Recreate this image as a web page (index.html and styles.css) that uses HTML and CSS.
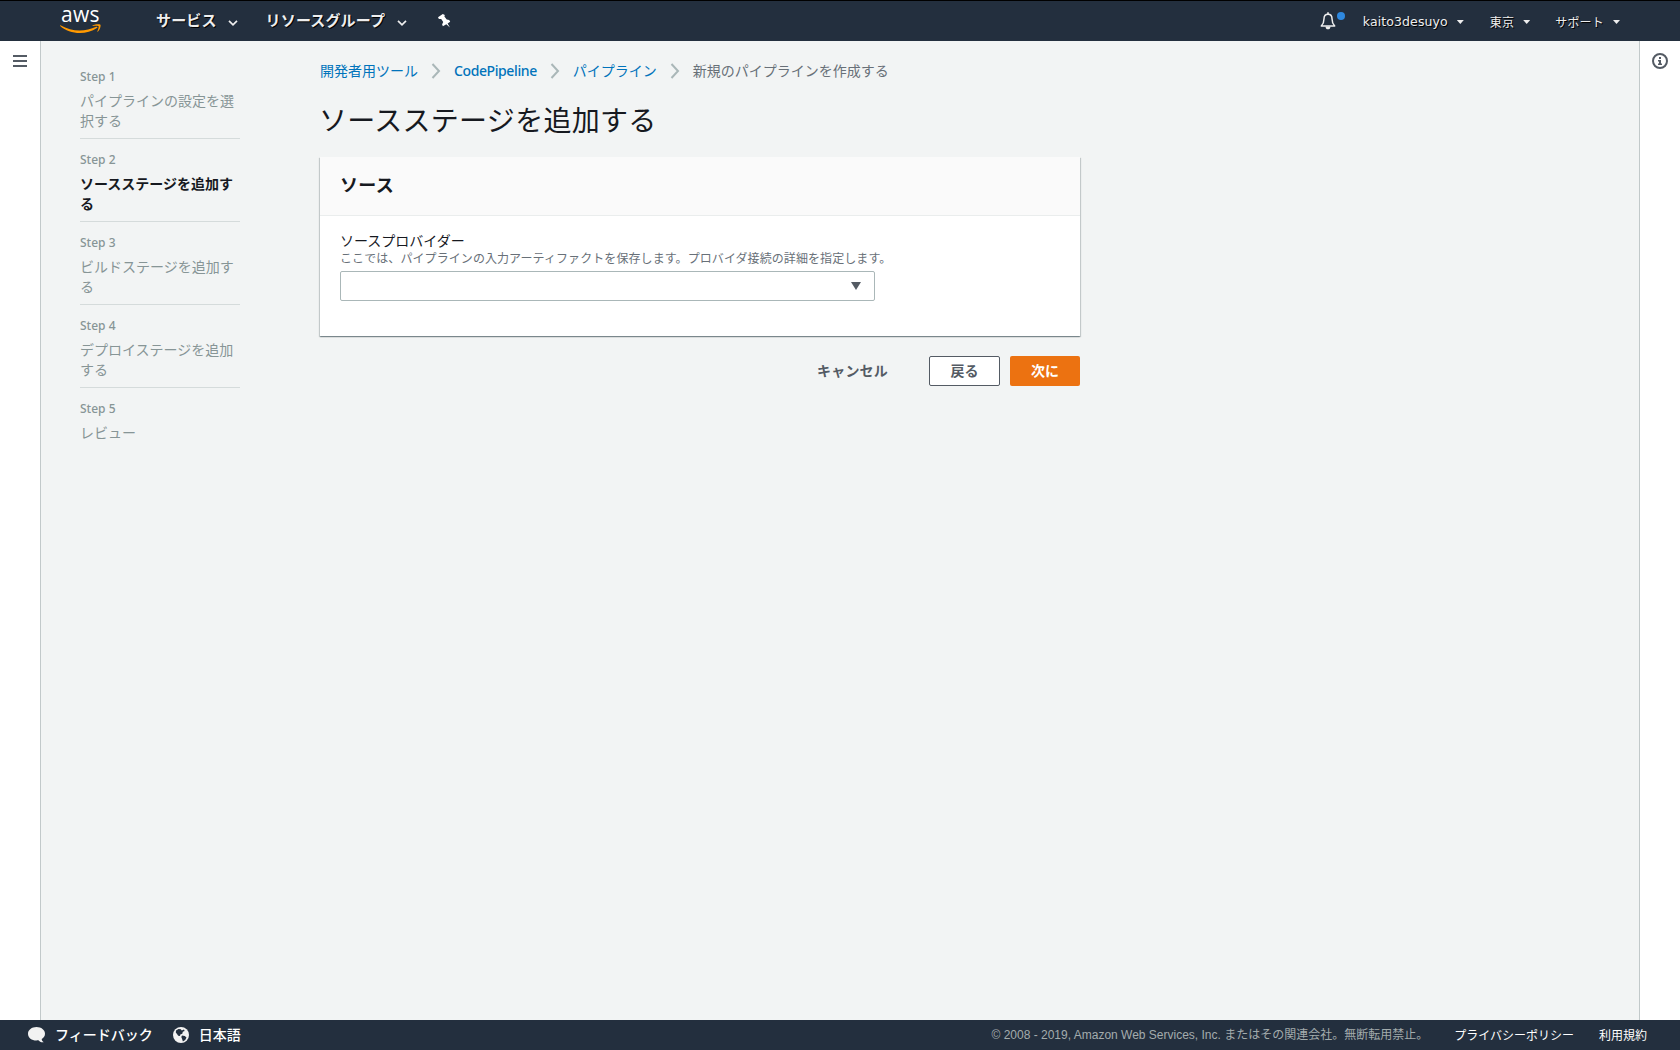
FILE: index.html
```html
<!doctype html>
<html lang="ja">
<head>
    <meta charset="UTF-8">
    <meta name="viewport" content="width=device-width, initial-scale=1.0">
    <title>ソースステージを追加する</title>
    <link rel="stylesheet" href="styles.css">
</head>
<body>
    <header>
        <a class="logo" href="#">
            <span class="logo-text">aws</span>
            <svg class="logo-smile" width="41" height="10" viewBox="0 0 41 10">
                <path d="M.4 1.200C12 8 25 8 36.200 2.800c1.200-.5 1.700.4.7 1.200C26 11.500 9.500 10.500.2 2 0 1.400 0 1 .4 1.200z" fill="#f90"/>
                <path d="M32.500 1.400C35 .2 39.500-.2 40.400.7c.6.900-.3 5.300-2.600 7.100-.5.200-.6-.1-.4-.5.800-1.900 1.600-4.500 1.100-5.200-.6-.600-3.600-.4-5.500-.2-.6 0-.8-.2-.5-.5z" fill="#f90"/>
            </svg>
        </a>
        <nav class="main-nav">
            <a class="services" href="#">サービス
                <svg width="10" height="6" viewBox="0 0 10 6"><path d="M1 .8l4 4 4-4" fill="none" stroke="#eee" stroke-width="1.700"/></svg>
            </a>
            <a class="groups" href="#">リソースグループ
                <svg width="10" height="6" viewBox="0 0 10 6"><path d="M1 .8l4 4 4-4" fill="none" stroke="#eee" stroke-width="1.700"/></svg>
            </a>
            <svg class="pin" width="13" height="14" viewBox="0 0 13 14">
                <path d="M4.800 0l2 1.100-.4 1.300 2.300 3.200 2.500.4 1 1.800-2.600 1.600 2.300 4-3.600-3.200-3.400 2-.8-1.800 1.100-2.300L3.200 4.900.9 5 0 3.200z" fill="#fff"/>
            </svg>
        </nav>
        <div class="account-nav">
            <span class="bell">
                <svg width="16" height="18" viewBox="0 0 16 18">
                    <path d="M8 2.200c-3 0-4 2.200-4 4.500 0 4-1 5.500-2.700 7.300h13.400C13 12.200 12 10.700 12 6.700c0-2.300-1-4.500-4-4.500z" fill="none" stroke="#eee" stroke-width="1.500" stroke-linejoin="round"/>
                    <path d="M7.200.3h1.600v2H7.200zM5.500 14.500h5C10.300 16.500 9.500 17.300 8 17.300s-2.300-.8-2.500-2.800z" fill="#eee"/>
                </svg>
                <span class="badge"></span>
            </span>
            <a class="user" href="#">kaito3desuyo <i class="caret"></i></a>
            <a href="#">東京 <i class="caret"></i></a>
            <a href="#">サポート <i class="caret"></i></a>
        </div>
    </header>

    <div class="page">
        <aside class="left-bar">
            <svg width="14" height="12" viewBox="0 0 14 12"><path d="M0 1h14M0 6h14M0 11h14" stroke="#545b64" stroke-width="2"/></svg>
        </aside>

        <div class="content">
            <ol class="steps">
                <li><small>Step 1</small>パイプラインの設定を選択する</li>
                <li class="active"><small>Step 2</small>ソースステージを追加する</li>
                <li><small>Step 3</small>ビルドステージを追加する</li>
                <li><small>Step 4</small>デプロイステージを追加する</li>
                <li><small>Step 5</small>レビュー</li>
            </ol>

            <main>
                <div class="breadcrumbs">
                    <a href="#">開発者用ツール</a>
                    <svg width="10" height="16" viewBox="0 0 10 16"><path d="M1.500 1l6.500 7-6.500 7" fill="none" stroke="#aab7b8" stroke-width="2"/></svg>
                    <a class="latin" href="#">CodePipeline</a>
                    <svg width="10" height="16" viewBox="0 0 10 16"><path d="M1.500 1l6.500 7-6.500 7" fill="none" stroke="#aab7b8" stroke-width="2"/></svg>
                    <a href="#">パイプライン</a>
                    <svg width="10" height="16" viewBox="0 0 10 16"><path d="M1.500 1l6.500 7-6.500 7" fill="none" stroke="#aab7b8" stroke-width="2"/></svg>
                    <span>新規のパイプラインを作成する</span>
                </div>

                <h1>ソースステージを追加する</h1>

                <section class="card">
                    <h2>ソース</h2>
                    <div class="card-body">
                        <div class="label">ソースプロバイダー</div>
                        <div class="hint">ここでは、パイプラインの入力アーティファクトを保存します。プロバイダ接続の詳細を指定します。</div>
                        <div class="select">
                            <svg width="10" height="8" viewBox="0 0 10 8"><path d="M0 0h10L5 8z" fill="#545b64"/></svg>
                        </div>
                    </div>
                </section>

                <div class="actions">
                    <button class="cancel">キャンセル</button>
                    <button class="back">戻る</button>
                    <button class="next">次に</button>
                </div>
            </main>
        </div>

        <aside class="right-bar">
            <svg width="16" height="16" viewBox="0 0 16 16">
                <circle cx="8" cy="8" r="7" fill="none" stroke="#545b64" stroke-width="2"/>
                <path d="M7 4h2v2H7zM6 7h3v3.500h1V12H6v-1.500h1v-2H6z" fill="#545b64"/>
            </svg>
        </aside>
    </div>

    <footer>
        <a class="feedback" href="#">
            <svg width="17" height="16" viewBox="0 0 17 16"><path d="M8.500 0C13.200 0 17 2.900 17 6.700c0 2.300-1.300 4.200-3.300 5.400.1 1.500.9 2.500 2 3.200-2.300.3-4.200-.5-5.300-2-5.500.9-10.400-2-10.400-6.600C0 2.900 3.800 0 8.500 0z" fill="#f2f2f2"/></svg>
            <span>フィードバック</span>
        </a>
        <a class="language" href="#">
            <svg width="16" height="16" viewBox="0 0 16 16">
                <circle cx="8" cy="8" r="8" fill="#f2f2f2"/>
                <path d="M3 3.500L5.500 2l2.300.2 1 1.300L11 2.600l.6 1.400-1.800.8-.5 1.900-2 .8-.3 1.600-1.800-.3L4 7 2.800 5.500zM9 8.500l2.800.5 1.700 1.400-1.300 2.500-2.300 1.700-.8-2.600L8.300 10z" fill="#232f3e"/>
            </svg>
            <span>日本語</span>
        </a>
        <span class="copyright">© 2008 - 2019, Amazon Web Services, Inc. またはその関連会社。無断転用禁止。</span>
        <a class="policy" href="#">プライバシーポリシー</a>
        <a class="policy" href="#">利用規約</a>
    </footer>
</body>
</html>
```
FILE: styles.css
```css
* {
    box-sizing: border-box;
}

body {
    margin: 0;
    height: 100vh;
    display: flex;
    flex-direction: column;
    background-color: #f2f4f4;
    color: #16191f;
    font-family: "Noto Sans CJK JP", sans-serif;
    font-size: 14px;
    line-height: 20px;
    overflow: hidden;
}

a {
    text-decoration: none;
}

svg {
    display: block;
    flex: none;
}

header {
    display: flex;
    height: 41px;
    border-top: 1px solid black;
    background-color: #232f3e;
    padding: 0 60px;
    text-shadow: 1px 1px 0 black;
}

header a {
    color: #eee;
}

.logo {
    width: 96px;
    padding-top: 5px;
    text-shadow: none;
}

.logo-text {
    display: block;
    height: 18px;
    padding-left: 1px;
    font: 500 21px/17px "Open Sans", sans-serif;
    letter-spacing: .3px;
    color: white;
}

.main-nav,
.main-nav a,
.account-nav,
.account-nav a {
    display: flex;
    align-items: center;
}

.main-nav {
    font-size: 15px;
    font-weight: bold;
}

.main-nav a {
    gap: 11px;
    padding-bottom: 2px;
    letter-spacing: .15px;
}

.main-nav a svg {
    margin-top: 5px;
}

.services {
    margin-right: 28px;
}

.groups svg {
    margin-left: 1px;
}

.pin {
    margin-left: 31px;
}

.account-nav {
    margin-left: auto;
    font-size: 12px;
    gap: 25px;
}

.account-nav a {
    gap: 9px;
    padding-top: 2px;
    letter-spacing: .2px;
}

.account-nav .user {
    margin-right: 1px;
    font-family: "DejaVu Sans", sans-serif;
    font-size: 12.5px;
    letter-spacing: .1px;
}

.caret {
    width: 7px;
    height: 4px;
    background-color: #eee;
    clip-path: polygon(0 0, 100% 0, 50% 100%);
}

.bell {
    position: relative;
    margin-right: 2px;
}

.badge {
    position: absolute;
    left: 17px;
    top: 0;
    width: 8px;
    height: 8px;
    border-radius: 50%;
    background-color: #2e88df;
}

.page {
    display: flex;
    flex: 1;
}

.left-bar,
.right-bar {
    width: 41px;
    background-color: white;
    display: flex;
    justify-content: center;
    align-items: flex-start;
}

.left-bar {
    border-right: 1px solid #c2c9ca;
    padding-top: 14px;
}

.right-bar {
    border-left: 1px solid #c2c9ca;
    padding-top: 12px;
}

.content {
    display: flex;
    flex: 1;
    padding-left: 39px;
}

.steps {
    list-style: none;
    width: 160px;
    margin: 26px 80px 0 0;
    padding: 0;
    color: #879596;
}

.steps li {
    height: 72px;
    margin-bottom: 11px;
    border-bottom: 1px solid #d5dbdb;
}

.steps li:last-child {
    border-bottom: 0;
}

.steps small {
    display: block;
    height: 23px;
    font: 500 12px/20px "Noto Sans", sans-serif;
}

.steps .active {
    font-weight: bold;
    color: #16191f;
}

.steps .active small {
    color: #879596;
}

main {
    width: 760px;
    padding-top: 19px;
}

.breadcrumbs {
    display: flex;
    align-items: center;
    gap: 13px;
    height: 22px;
    color: #687078;
}

.breadcrumbs a,
.breadcrumbs span {
    padding-bottom: 2px;
}

.breadcrumbs a {
    color: #0073bb;
}

.breadcrumbs .latin {
    padding: 0;
    font-family: "Noto Sans", sans-serif;
    font-weight: 500;
    letter-spacing: -.4px;
}

h1 {
    margin: 19px 0 20px -1px;
    font-size: 28px;
    font-weight: normal;
    line-height: 36px;
    letter-spacing: .3px;
}

.card {
    height: 179px;
    background-color: white;
    box-shadow: 0 1px 1px 0 rgba(0, 28, 36, .3), 1px 1px 1px 0 rgba(0, 28, 36, .15), -1px 1px 1px 0 rgba(0, 28, 36, .15);
}

h2 {
    margin: 0;
    height: 59px;
    padding: 14px 20px;
    border-bottom: 1px solid #eaeded;
    background-color: #fafafa;
    font-size: 18px;
    line-height: 26px;
    letter-spacing: .3px;
}

.card-body {
    padding: 14px 20px;
}

.label {
    height: 20px;
}

.hint {
    font-size: 12px;
    line-height: 16px;
    height: 21px;
    letter-spacing: .08px;
    color: #687078;
    white-space: nowrap;
}

.select {
    display: flex;
    align-items: center;
    justify-content: flex-end;
    width: 535px;
    height: 30px;
    padding-right: 13px;
    border: 1px solid #aab7b8;
    border-radius: 2px;
}

.actions {
    display: flex;
    justify-content: flex-end;
    gap: 10px;
    margin-top: 20px;
}

button {
    height: 30px;
    padding: 0 20px 2px;
    border: 1px solid transparent;
    border-radius: 2px;
    background-color: transparent;
    color: #545b64;
    font: bold 14px/20px "Noto Sans CJK JP", sans-serif;
}

.cancel {
    margin-right: 10px;
    letter-spacing: .2px;
}

.back {
    width: 71px;
    border-color: #545b64;
    background-color: white;
}

.next {
    width: 70px;
    background-color: #ec7211;
    color: white;
}

footer {
    display: flex;
    align-items: center;
    height: 30px;
    padding: 0 33px 0 28px;
    background-color: #232f3e;
    font-size: 12px;
}

footer a {
    display: flex;
    align-items: center;
    color: white;
}

.feedback,
.language {
    gap: 10px;
    margin-right: 20px;
    font-size: 14px;
    font-weight: 500;
}

.feedback span,
.language span {
    padding-bottom: 2px;
}

.copyright {
    margin-left: auto;
    font-family: "Liberation Sans", "Noto Sans CJK JP", sans-serif;
    color: #a3acad;
}

.policy {
    margin-left: 26px;
    padding-bottom: 1px;
}

.policy:last-child {
    margin-left: 25px;
}
```
